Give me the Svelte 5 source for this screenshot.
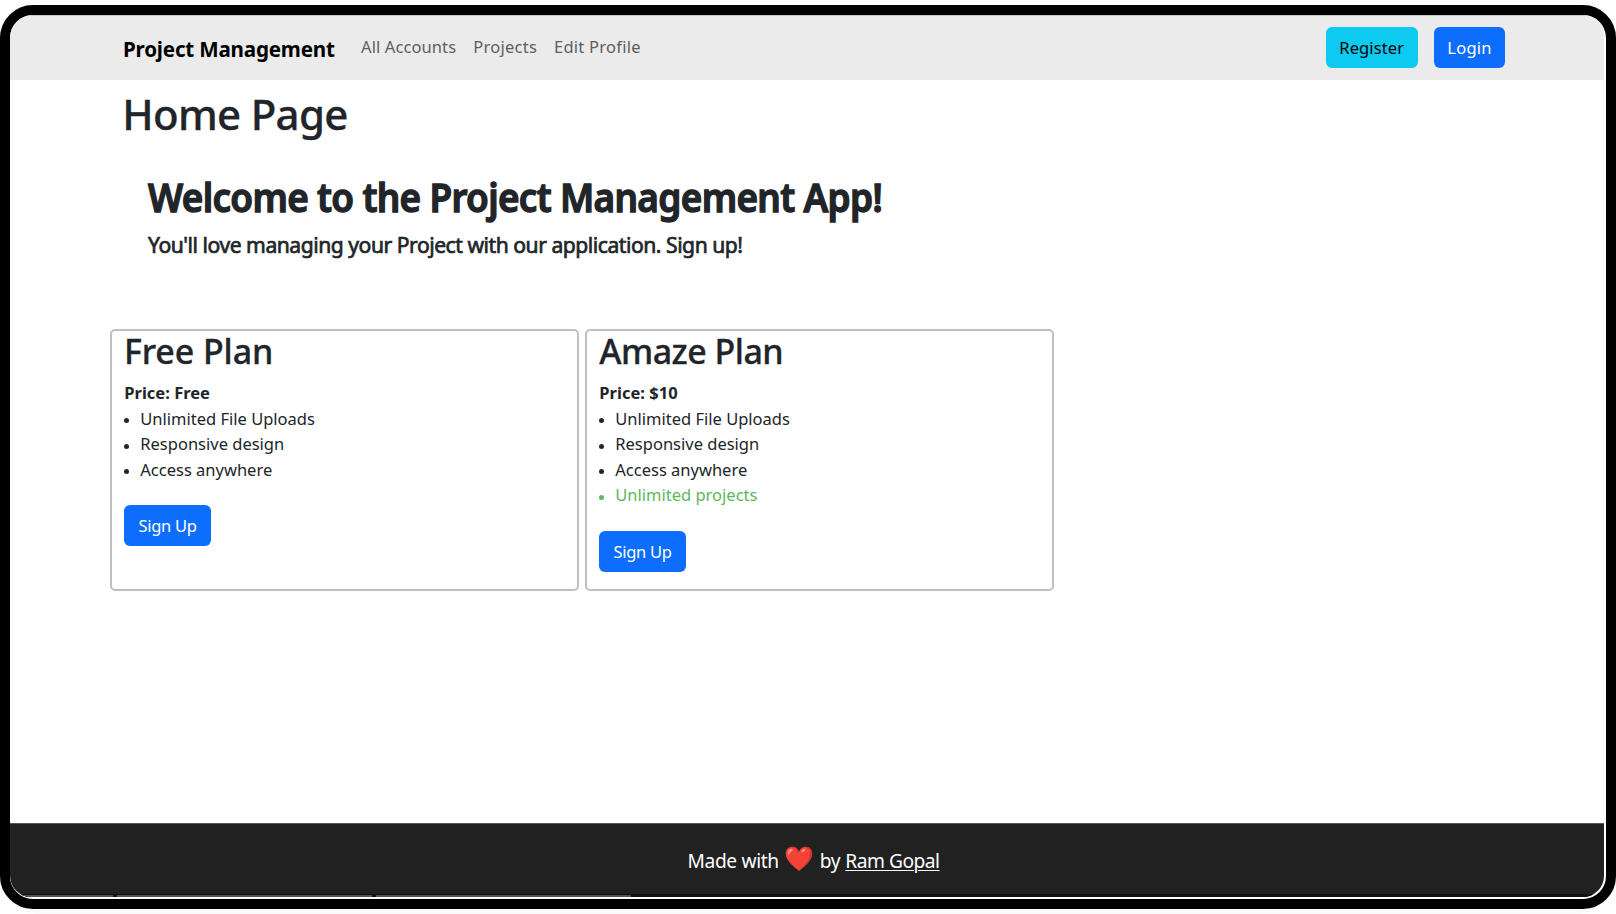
<script>
  const links = [
    { name: 'All Accounts', spacing: 0.1 },
    { name: 'Projects', spacing: 0.26 },
    { name: 'Edit Profile', spacing: 0.24 }
  ];
  const features = ['Unlimited File Uploads', 'Responsive design', 'Access anywhere'];
</script>

<div class="page">
  <div class="window">
    <nav>
      <span class="brand">Project Management</span>
      <div class="links">
        {#each links as link}
          <span style="letter-spacing: {link.spacing}px">{link.name}</span>
        {/each}
      </div>
      <div class="actions">
        <button class="btn register">Register</button>
        <button class="btn login">Login</button>
      </div>
    </nav>

    <main>
      <h1>Home Page</h1>
      <section class="hero">
        <h2>Welcome to the Project Management App!</h2>
        <p>You'll love managing your Project with our application. Sign up!</p>
      </section>
      <section class="plans">
        <article>
          <h3 class="free">Free Plan</h3>
          <strong>Price: Free</strong>
          <ul>
            {#each features as feature}<li>{feature}</li>{/each}
          </ul>
          <button class="btn signup">Sign Up</button>
        </article>
        <article>
          <h3 class="amaze">Amaze Plan</h3>
          <strong class="ten">Price: $10</strong>
          <ul>
            {#each features as feature}<li>{feature}</li>{/each}
            <li class="extra">Unlimited projects</li>
          </ul>
          <button class="btn signup">Sign Up</button>
        </article>
      </section>
    </main>

    <footer>
      <p><span>Made with</span><span class="heart">❤️</span><span>by</span><span class="author">Ram Gopal</span></p>
      <div class="edge"><i></i><i></i><i></i></div>
    </footer>
  </div>
</div>

<style>
  :global(body) { background: #fff; overflow: hidden; }
  * { box-sizing: border-box; }
  .page {
    width: 1616px;
    height: 914px;
    padding-top: 5px;
    background: #fafafa;
    border-radius: 38px;
    font-family: "Noto Sans", sans-serif;
    font-size: 16.5px;
    line-height: 25.6px;
    color: #212529;
  }
  .window {
    height: 904px;
    border: 10px solid #000;
    border-radius: 33px;
    background: #fff;
    overflow: hidden;
    display: flex;
    flex-direction: column;
  }
  nav {
    width: 1594px;
    height: 65px;
    padding: 11.3px 99px 0 113px;
    border-top: 1px solid #cbc6c9;
    background: #ebebeb;
    display: flex;
    align-items: flex-start;
  }
  .brand {
    width: 238px;
    margin-top: 2px;
    font-size: 20.6px;
    font-weight: 700;
    line-height: 40px;
    letter-spacing: -0.197px;
    color: #000;
    white-space: nowrap;
  }
  .links {
    display: flex;
    gap: 17px;
    line-height: 39px;
    color: #5e5e5e;
  }
  .actions { display: flex; gap: 16px; margin-left: auto; }
  .btn {
    height: 41px;
    padding: 0;
    border: 0;
    border-radius: 6px;
    background: #0d6efd;
    color: #fff;
    font: inherit;
    line-height: 40px;
    text-align: center;
  }
  .actions .btn { line-height: 39px; }
  .register { width: 92.5px; background: #0dcaf0; color: #000; letter-spacing: 0.12px; }
  .login { width: 71px; letter-spacing: 0.24px; }
  .signup { display: block; width: 86.5px; margin-top: 23px; letter-spacing: -0.33px; }
  main { padding: 7.6px 0 0 100.3px; flex: 1; }
  h1, h2, h3, p, ul { margin: 0; padding: 0; }
  h1 {
    padding-left: 12px;
    font-size: 42px;
    font-weight: 500;
    line-height: 51px;
    letter-spacing: -0.7px;
    -webkit-text-stroke: 0.3px #212529;
  }
  .hero { padding: 34.8px 0 69.8px 38.2px; white-space: nowrap; }
  h2 {
    font-size: 39px;
    font-weight: 600;
    line-height: 48px;
    letter-spacing: -0.7px;
    transform: scaleX(0.946);
    transform-origin: left;
    -webkit-text-stroke: 1.3px #212529;
  }
  .hero p {
    margin-top: 10px;
    font-size: 22.4px;
    line-height: 28px;
    letter-spacing: -0.5px;
    transform: scaleX(0.943);
    transform-origin: left;
    -webkit-text-stroke: 0.7px #212529;
  }
  .plans { display: flex; gap: 6px; }
  article {
    width: 469px;
    height: 261.5px;
    padding-left: 12px;
    border: 2px solid #bfbfbf;
    border-radius: 5px;
  }
  h3 {
    font-size: 34px;
    font-weight: 500;
    line-height: 40px;
    -webkit-text-stroke: 0.3px #212529;
  }
  .free { margin-left: -0.4px; letter-spacing: -0.1px; }
  .amaze { letter-spacing: -0.54px; }
  strong { display: block; margin-top: 8.9px; font-weight: 700; }
  .ten { letter-spacing: 0.02px; }
  li {
    list-style: none;
    display: flex;
    align-items: center;
  }
  li::before {
    content: "";
    width: 5px;
    height: 5px;
    margin: 4px 11px 0 0;
    border-radius: 50%;
    background: currentColor;
  }
  .extra { color: #5cb85c; }
  footer {
    width: 1594px;
    height: 74px;
    margin-bottom: 2px;
    border-top: 1px solid #555;
    background: #212121;
    color: #fff;
    border-radius: 0 0 21px 21px;
    overflow: hidden;
    display: flex;
    flex-direction: column;
    justify-content: space-between;
  }
  footer p {
    display: flex;
    justify-content: center;
    padding: 22.6px 0 0 13px;
    font-size: 19.2px;
    line-height: 28px;
    letter-spacing: -0.36px;
  }
  .heart { margin: -3px 6.5px 0 5px; width: 29.5px; font-size: 24px; letter-spacing: 0; }
  .author {
    margin-left: 5px;
    letter-spacing: -0.5px;
    text-decoration: underline;
    text-underline-offset: 2px;
    text-decoration-thickness: 1px;
  }
  .edge { height: 3px; background: #111; display: flex; gap: 4px; padding-top: 1px; }
  .edge i { background: #555; width: 255px; }
  .edge i:first-child { width: 103px; }
</style>
